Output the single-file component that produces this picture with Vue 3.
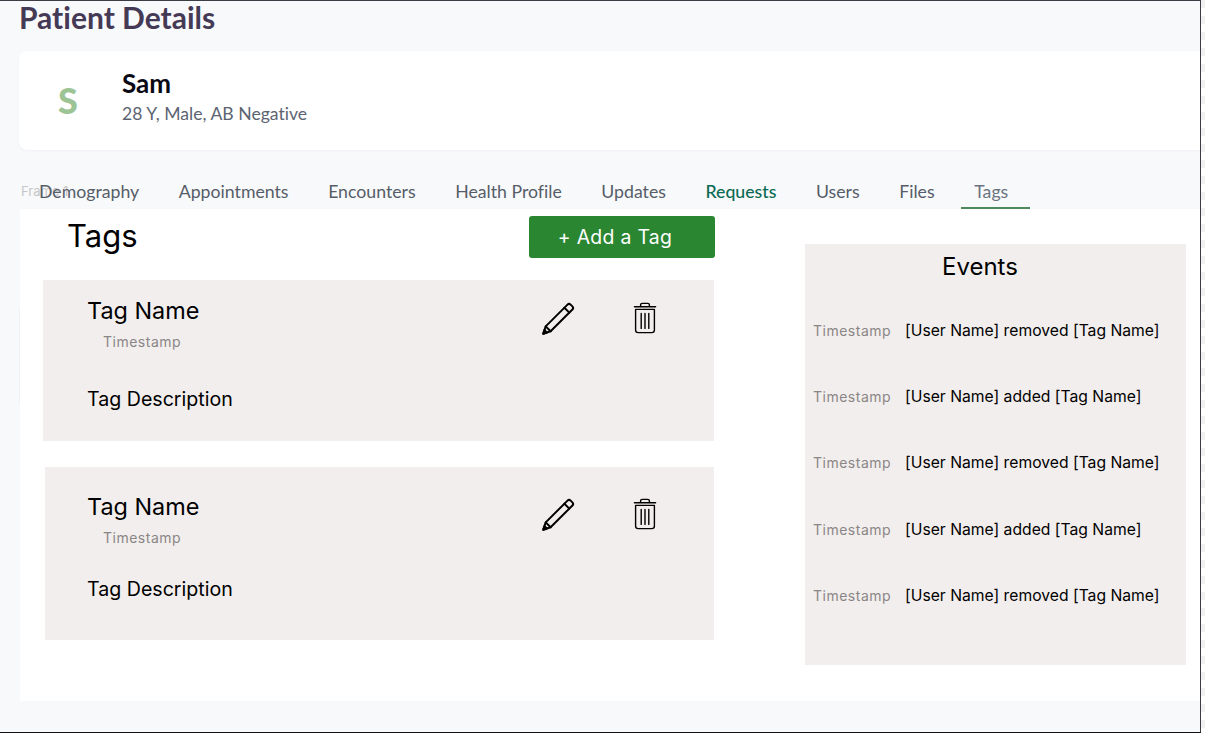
<script setup>
const tabs = ['Demography', 'Appointments', 'Encounters', 'Health Profile', 'Updates', 'Requests', 'Users', 'Files', 'Tags']
const cards = [
  { id: 1, cls: 'first' },
  { id: 2, cls: 'second' },
]
const events = [
  { id: 1, text: '[User Name] removed [Tag Name]' },
  { id: 2, text: '[User Name] added [Tag Name]' },
  { id: 3, text: '[User Name] removed [Tag Name]' },
  { id: 4, text: '[User Name] added [Tag Name]' },
  { id: 5, text: '[User Name] removed [Tag Name]' },
]
</script>

<template>
  <div class="page">
    <div class="frame">
      <h1 class="title">Patient Details</h1>
      <section class="patient">
        <div class="avatar">S</div>
        <div class="info">
          <div class="name">Sam</div>
          <div class="meta">28 Y, Male, AB Negative</div>
        </div>
      </section>
      <span class="ghost-label">Frame 1</span>
      <span class="ghost-card"></span>
      <nav class="tabs">
        <a
          v-for="t in tabs"
          :key="t"
          class="tab"
          :class="{ requests: t === 'Requests', active: t === 'Tags' }"
        >{{ t }}</a>
      </nav>
      <main class="panel">
        <div class="left">
          <div class="head">
            <h2 class="heading">Tags</h2>
            <button class="add">+ Add a Tag</button>
          </div>
          <article v-for="c in cards" :key="c.id" class="card" :class="c.cls">
            <div class="card-top">
              <div>
                <div class="tag-name">Tag Name</div>
                <div class="stamp">Timestamp</div>
              </div>
              <div class="actions">
                <svg class="pencil" width="34" height="34" viewBox="0 0 34 34" fill="none" stroke="#000" stroke-width="2" stroke-linejoin="round" stroke-linecap="round">
                  <path d="M26.5 2.6 a2.2 2.2 0 0 1 3.1 0 l1.8 1.8 a2.2 2.2 0 0 1 0 3.1 L9.6 29.3 L2.2 31.8 L4.7 24.4 Z" />
                  <path d="M23.4 5.7 L28.3 10.6" />
                  <path d="M4.7 24.4 L9.6 29.3" />
                  <path d="M2.2 31.8 L3.4 28 L6 30.6 Z" fill="#000" />
                </svg>
                <svg class="trash" width="24" height="32" viewBox="0 0 24 32" fill="none" stroke="#000" stroke-width="1.4" stroke-linecap="round" stroke-linejoin="round">
                  <path d="M1.4 4.8 H22.6" />
                  <path d="M7.6 4.4 V3 a1.6 1.6 0 0 1 1.6 -1.6 h5.6 a1.6 1.6 0 0 1 1.6 1.6 V4.4" />
                  <path d="M2.6 7.4 H21.4 V28 a2.6 2.6 0 0 1 -2.6 2.6 H5.2 a2.6 2.6 0 0 1 -2.6 -2.6 Z" />
                  <path d="M8.2 11.4 V26.4 M12 11.4 V26.4 M15.8 11.4 V26.4" />
                </svg>
              </div>
            </div>
            <div class="desc">Tag Description</div>
          </article>
        </div>
        <aside class="events">
          <h3 class="events-title">Events</h3>
          <div v-for="e in events" :key="e.id" class="event">
            <span class="event-time">Timestamp</span>
            <span class="event-text">{{ e.text }}</span>
          </div>
        </aside>
      </main>
    </div>
  </div>
</template>

<style>
html, body { margin: 0; background: #fff; }
</style>

<style scoped>
.page {
  width: 1205px;
  height: 733px;
  overflow: hidden;
  background-color: #fff;
  background-image: linear-gradient(#f1f1f1 50%, transparent 50%);
  background-size: 100% 16px;
  font-family: Inter, "Liberation Sans", sans-serif;
  font-variant-ligatures: none;
}
.frame {
  position: relative;
  box-sizing: border-box;
  width: 1201px;
  height: 733px;
  background: #f8f9fb;
  border-top: 1px solid #3c3c44;
  border-bottom: 1px solid #111;
  border-right: 1px solid #3c3c44;
  padding-left: 19px;
  overflow: hidden;
}
.title {
  margin: 0;
  height: 50px;
  font-family: Lato, sans-serif;
  font-size: 30px;
  line-height: 32px;
  font-weight: 700;
  color: #453a55;
}
.patient {
  display: flex;
  align-items: center;
  height: 99px;
  background: #fff;
  border-radius: 8px 0 0 8px;
  box-shadow: 0 1px 3px rgba(20, 30, 60, 0.04);
}
.avatar {
  width: 103px;
  padding: 0 0 2px 39px;
  box-sizing: border-box;
  font-family: Lato, sans-serif;
  font-weight: 900;
  font-size: 36px;
  line-height: 40px;
  color: #9cc495;
}
.info { padding-bottom: 8px; }
.name {
  font-family: Lato, sans-serif;
  font-size: 26px;
  font-weight: 700;
  line-height: 30px;
  color: #0a0a14;
}
.meta {
  margin-top: 4px;
  font-family: Lato, sans-serif;
  font-size: 17.6px;
  line-height: 24px;
  color: #5c6472;
}
.ghost-label {
  position: absolute;
  left: 21px;
  top: 182px;
  font-size: 13px;
  color: #c6c6c8;
}
.ghost-card {
  position: absolute;
  left: 19px;
  top: 304px;
  width: 10px;
  height: 100px;
  border: 1px solid #eef0f3;
  border-radius: 6px 0 0 6px;
}
.tabs {
  position: relative;
  display: flex;
  gap: 0;
  height: 59px;
  box-sizing: border-box;
  padding: 31px 0 0 0;
}
.tab {
  box-sizing: border-box;
  height: 28px;
  padding: 0 19.6px 0 20px;
  font-family: Lato, sans-serif;
  font-size: 17.7px;
  line-height: 22px;
  color: #565d68;
  white-space: nowrap;
}
.tab.requests { color: #0b6a53; font-weight: 500; }
.tab.active {
  color: #6b7280;
  padding: 0 22px 0 13px;
  border-bottom: 2px solid #4f8a5e;
  margin-left: 7px;
}
.panel {
  position: relative;
  display: flex;
  width: 1181px;
  height: 492px;
  margin-left: 1px;
  background: #fff;
  box-sizing: border-box;
  padding-left: 23px;
}
.left {
  width: 672px;
  display: flex;
  flex-direction: column;
}
.head {
  display: flex;
  justify-content: space-between;
  height: 71px;
  box-sizing: border-box;
  padding: 7px 0 0 24px;
}
.heading {
  margin: 0;
  font-size: 31px;
  font-weight: 400;
  line-height: 40px;
  color: #000;
}
.add {
  width: 186px;
  height: 42px;
  padding: 0 14px 0 0;
  background: #2b8632;
  border: 0;
  border-radius: 3px;
  color: #fff;
  font-family: Inter, sans-serif;
  font-size: 19.4px;
  letter-spacing: 0.3px;
}
.card {
  position: relative;
  box-sizing: border-box;
  background: #f2eeed;
  padding-left: 44px;
  color: #000;
}
.first { height: 161px; margin-right: 1px; padding-top: 16px; }
.second { height: 173px; margin: 26px 1px 0 2px; padding-left: 42px; padding-top: 25px; }
.card-top {
  display: flex;
  justify-content: space-between;
}
.tag-name {
  font-size: 23.4px;
  line-height: 30px;
}
.stamp {
  margin: 6px 0 0 16px;
  font-size: 14px;
  line-height: 20px;
  letter-spacing: 0.5px;
  color: #8a8686;
}
.actions {
  display: flex;
  align-items: flex-start;
  gap: 58px;
  margin: 6px 57px 0 0;
}
.desc {
  font-size: 19.6px;
  line-height: 28px;
  margin-top: 33px;
}
.second .desc { margin-top: 27px; }
.events {
  box-sizing: border-box;
  width: 381px;
  height: 421px;
  margin: 35px 0 0 90px;
  background: #f2eeed;
  padding: 8px 0 0 8px;
}
.events-title {
  margin: 0 0 15px 129px;
  font-size: 24px;
  font-weight: 400;
  line-height: 30px;
  color: #000;
}
.event {
  display: flex;
  align-items: center;
  gap: 14px;
  height: 66.3px;
}
.event-time {
  font-size: 14px;
  letter-spacing: 0.5px;
  color: #8a8686;
  width: 78px;
}
.event-text {
  font-size: 15.7px;
  color: #000;
  white-space: nowrap;
}
</style>
